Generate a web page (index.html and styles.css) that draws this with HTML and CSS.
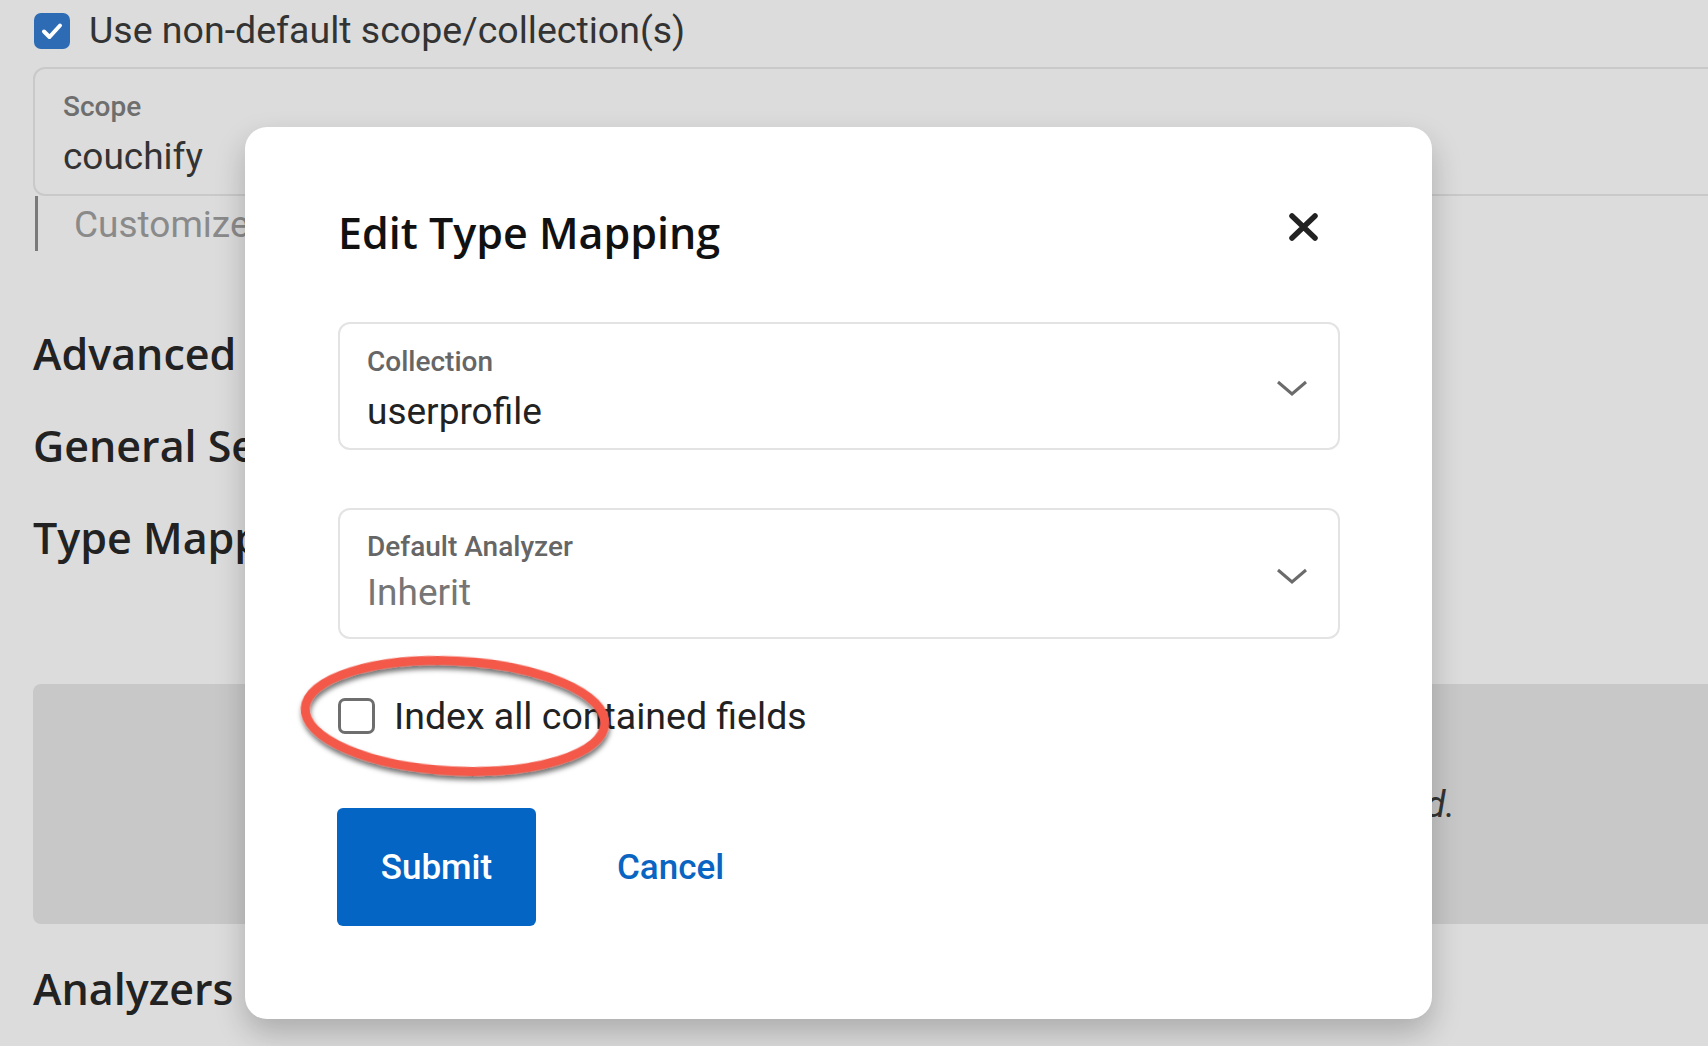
FILE: index.html
```html
<!DOCTYPE html>
<html lang="en">
<head>
<meta charset="utf-8">
<title>Edit Type Mapping</title>
<link rel="stylesheet" href="styles.css">
</head>
<body>
<div class="page">
  <div class="check-row">
    <span class="cb cb-checked">
      <svg viewBox="0 0 36 36" width="36" height="36"><path d="M10 18.5 L15.5 24 L26 12.5" fill="none" stroke="#fff" stroke-width="4" stroke-linecap="round" stroke-linejoin="round"/></svg>
    </span>
    <span class="check-text">Use non-default scope/collection(s)</span>
  </div>
  <div class="field scope-field">
    <div class="field-label">Scope</div>
    <div class="field-value">couchify</div>
  </div>
  <div class="helper">Customize scope</div>
  <h2 class="section first">Advanced</h2>
  <h3 class="section">General Settings</h3>
  <h3 class="section">Type Mappings</h3>
  <div class="empty-box"><em>No type mappings configured; the default mapping will be used.</em></div>
  <h3 class="section analyzers">Analyzers</h3>
</div>

<div class="overlay">
  <div class="modal">
    <div class="modal-head">
      <h1 class="modal-title">Edit Type Mapping</h1>
      <button class="close" aria-label="Close">
        <svg viewBox="0 0 31 30" width="31" height="30"><path d="M4 4 L27 26 M27 4 L4 26" fill="none" stroke="#222" stroke-width="5.5" stroke-linecap="round"/></svg>
      </button>
    </div>
    <div class="select sel-collection">
      <div class="select-body">
        <div class="field-label">Collection</div>
        <div class="field-value">userprofile</div>
      </div>
      <svg class="chev" viewBox="0 0 32 16" width="32" height="16"><path d="M2 2 L16 14 L30 2" fill="none" stroke="#6b6b6b" stroke-width="3"/></svg>
    </div>
    <div class="select sel-analyzer">
      <div class="select-body">
        <div class="field-label">Default Analyzer</div>
        <div class="field-value placeholder">Inherit</div>
      </div>
      <svg class="chev" viewBox="0 0 32 16" width="32" height="16"><path d="M2 2 L16 14 L30 2" fill="none" stroke="#6b6b6b" stroke-width="3"/></svg>
    </div>
    <div class="modal-check">
      <span class="cb cb-empty"></span>
      <span class="check-text dark">Index all contained fields</span>
    </div>
    <div class="actions">
      <button class="btn-submit">Submit</button>
      <a class="btn-cancel" href="#">Cancel</a>
    </div>
    <svg class="annot" viewBox="0 0 340 150" width="340" height="150">
      <defs>
        <filter id="sh" x="-10%" y="-20%" width="120%" height="150%">
          <feDropShadow dx="1" dy="4" stdDeviation="2.5" flood-color="#000" flood-opacity="0.55"/>
        </filter>
      </defs>
      <ellipse cx="170" cy="72" rx="150" ry="55" transform="rotate(3 170 72)" fill="none" stroke="#f3594a" stroke-width="9" filter="url(#sh)"/>
    </svg>
  </div>
</div>
</body>
</html>
```

FILE: styles.css
```css
html, body {
  margin: 0;
  padding: 0;
}
body {
  width: 1708px;
  height: 1046px;
  overflow: hidden;
  background: #dcdcdc;
  font-family: Roboto, "Liberation Sans", Arial, sans-serif;
  color: #333;
  position: relative;
}
.page {
  width: 1900px;
  padding-left: 33px;
  padding-top: 12px;
  box-sizing: content-box;
}
.check-row {
  display: flex;
  align-items: center;
  height: 36px;
}
.cb {
  display: inline-block;
  box-sizing: border-box;
  flex: none;
}
.cb-checked {
  width: 36px;
  height: 36px;
  margin-left: 1px;
  margin-top: 2px;
  background: #2d6bb5;
  border-radius: 7px;
}
.cb-checked svg {
  display: block;
}
.check-text {
  font-size: 37.5px;
  line-height: 36px;
  margin-left: 19px;
  color: #333;
}
.field {
  border: 2px solid #c9c9c9;
  border-radius: 12px;
  padding: 23px 27px 17px 28px;
}
.scope-field {
  margin-top: 19px;
}
.field-label {
  font-size: 28px;
  line-height: 30px;
  font-weight: 500;
  color: #6e6e6e;
}
.field-value {
  font-size: 37px;
  line-height: 40px;
  margin-top: 15px;
  color: #333;
}
.helper {
  margin-left: 2px;
  border-left: 3px solid #7a7a7a;
  height: 55px;
  line-height: 58px;
  padding-left: 36px;
  font-size: 37px;
  color: #8a8a8a;
  white-space: nowrap;
}
.section {
  font-family: "Open Sans", "Noto Sans", sans-serif;
  font-weight: 600;
  font-size: 43px;
  line-height: 60px;
  margin: 32px 0 0 0;
  color: #222;
  white-space: nowrap;
}
.section.first {
  margin-top: 73px;
}
.empty-box {
  margin-top: 116px;
  height: 240px;
  background: #c8c8c8;
  border-radius: 8px;
  display: flex;
  align-items: center;
  justify-content: flex-end;
  padding-right: 478px;
  font-size: 37px;
  color: #333;
  white-space: nowrap;
}
.section.analyzers {
  margin-top: 35px;
}

/* overlay + modal */
.overlay {
  position: absolute;
  inset: 0;
  padding: 127px 0 0 245px;
}
.modal {
  position: relative;
  width: 1187px;
  height: 892px;
  box-sizing: border-box;
  background: #fff;
  border-radius: 22px;
  box-shadow: 0 14px 30px rgba(0, 0, 0, 0.22);
  padding: 76px 92px 0 93px;
}
.modal-head {
  display: flex;
  justify-content: space-between;
  align-items: flex-start;
  height: 60px;
}
.modal-title {
  margin: 0;
  font-family: "Open Sans", "Noto Sans", sans-serif;
  font-weight: 600;
  font-size: 43px;
  line-height: 60px;
  color: #111;
}
.close {
  border: 0;
  background: none;
  padding: 0;
  margin: 9px 21px 0 0;
  width: 31px;
  height: 30px;
}
.close svg {
  display: block;
}
.select {
  display: flex;
  align-items: center;
  border: 2px solid #e3e3e3;
  border-radius: 12px;
  padding: 0 30px 0 27px;
}
.select-body {
  flex: 1;
}
.sel-collection {
  margin-top: 59px;
  height: 128px;
  box-sizing: border-box;
}
.sel-collection .select-body {
  padding-top: 6px;
}
.sel-analyzer {
  margin-top: 58px;
  height: 131px;
  box-sizing: border-box;
}
.sel-analyzer .select-body {
  margin-top: -2px;
}
.sel-analyzer .field-value {
  margin-top: 11px;
}
.select .field-label {
  color: #666;
}
.select .field-value {
  color: #222;
}
.select .field-value.placeholder {
  color: #767676;
}
.chev {
  flex: none;
  margin-top: 4px;
}
.modal-check {
  display: flex;
  align-items: center;
  margin-top: 57px;
  height: 40px;
}
.cb-empty {
  width: 37px;
  height: 36px;
  border: 3px solid #6e6e6e;
  border-radius: 7px;
}
.check-text.dark {
  color: #222;
  margin-left: 19px;
  font-size: 37.5px;
  line-height: 40px;
}
.actions {
  display: flex;
  align-items: center;
  margin-top: 72px;
}
.btn-submit {
  width: 199px;
  height: 118px;
  border: 0;
  border-radius: 6px;
  background: #0565c4;
  color: #fff;
  font-family: Roboto, "Liberation Sans", sans-serif;
  font-weight: 500;
  font-size: 35px;
  padding: 0;
  margin-left: -1px;
}
.btn-cancel {
  margin-left: 81px;
  font-size: 35px;
  font-weight: 500;
  color: #0a64c2;
  text-decoration: none;
}
.annot {
  position: absolute;
  left: 40px;
  top: 517px;
  overflow: visible;
}
```
